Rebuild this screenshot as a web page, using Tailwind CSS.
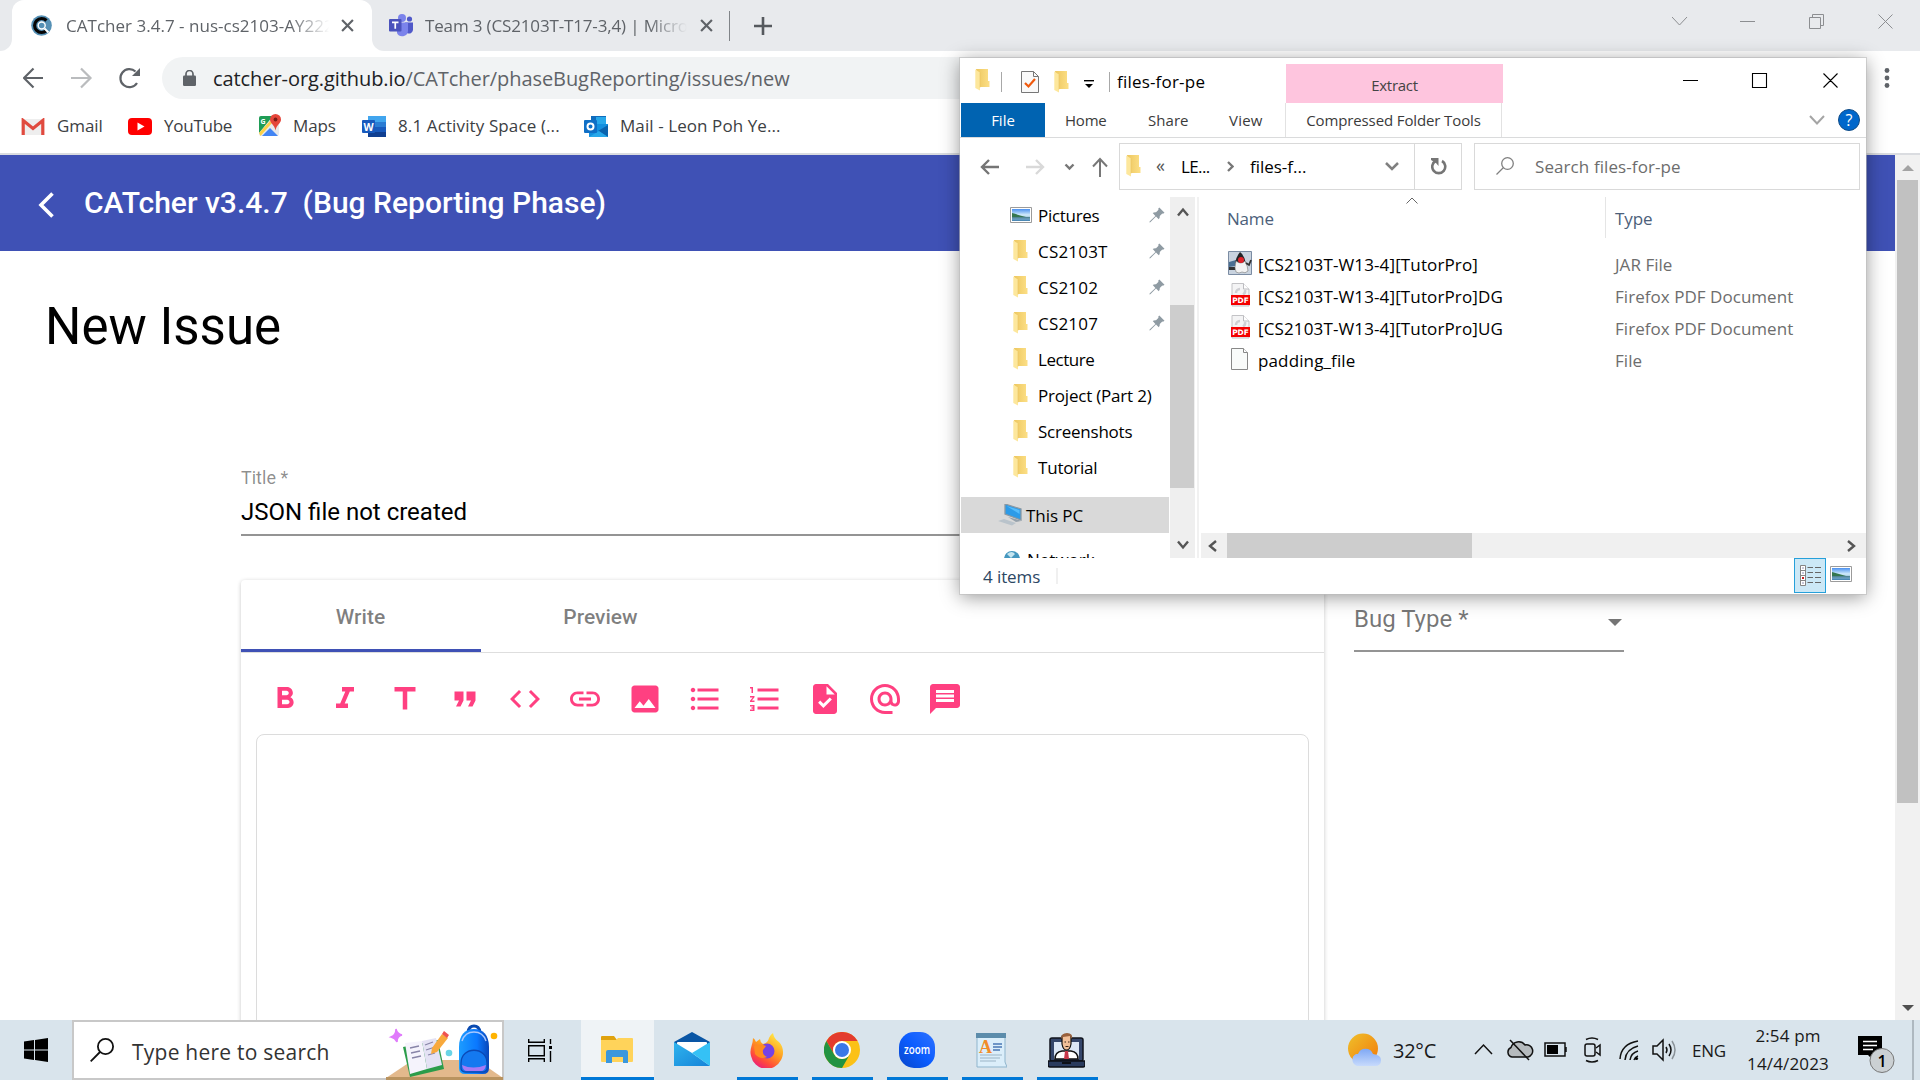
<!DOCTYPE html>
<html lang="en">
<head>
<meta charset="utf-8">
<title>CATcher</title>
<script src="https://cdn.jsdelivr.net/npm/@tailwindcss/browser@4"></script>
</head>
<body class="w-[1920px] h-[1080px] overflow-hidden relative flex flex-col bg-white font-['Open_Sans',sans-serif]">

<svg class="absolute size-0">
  <defs>
    <linearGradient id="fold" x1="0" x2="1"><stop offset="0" stop-color="#edc75f"/><stop offset="1" stop-color="#fcdf86"/></linearGradient>
    <linearGradient id="sky" x1="0" x2="0" y1="0" y2="1"><stop offset="0" stop-color="#4a90f0"/><stop offset=".5" stop-color="#d3ecfb"/><stop offset="1" stop-color="#3f7fae"/></linearGradient>
    <linearGradient id="sun" x1="0" x2="1" y1="0" y2="1"><stop offset="0" stop-color="#efc02b"/><stop offset="1" stop-color="#f27a0a"/></linearGradient>
    <linearGradient id="cloud" x1="0" x2="0" y1="0" y2="1"><stop offset="0" stop-color="#7fa8f5"/><stop offset="1" stop-color="#c7dafc"/></linearGradient>
    <linearGradient id="bag" x1="0" x2="1"><stop offset="0" stop-color="#1c9cff"/><stop offset=".6" stop-color="#0a78ff"/><stop offset="1" stop-color="#0a46b8"/></linearGradient>
    <linearGradient id="fox" x1=".8" x2=".2" y1="0" y2="1"><stop offset="0" stop-color="#fff04a"/><stop offset=".45" stop-color="#ff9a1f"/><stop offset=".75" stop-color="#ff4a3c"/><stop offset="1" stop-color="#e61587"/></linearGradient>
    <linearGradient id="mailg" x1="0" x2="1" y1="0" y2="1"><stop offset="0" stop-color="#2fb4ee"/><stop offset="1" stop-color="#1583d8"/></linearGradient>
    <linearGradient id="zoomg" x1="1" x2="0" y1="0" y2="1"><stop offset="0" stop-color="#2f72ff"/><stop offset=".5" stop-color="#0b5cff"/><stop offset="1" stop-color="#0846c9"/></linearGradient>
    <symbol id="folder" viewBox="0 0 15 22"><path d="M1 0h12v12h1.500v6H4z" fill="url(#fold)"/><path d="M.3.6 5 3.500V21.500L.3 19z" fill="#fde79c"/><path d="M5 3.500v15" stroke="#e9c463" stroke-width=".6"/></symbol>
    <symbol id="pic" viewBox="0 0 22 16"><path d="M.5.5h21v15H.5z" fill="#fff" stroke="#9b9b9b"/><path d="M2 2h18v12H2z" fill="url(#sky)"/><path d="M2 6q7 2 14 4H2z" fill="#35764f"/><path d="M2 10h18v1.500H2z" fill="#356c78" opacity=".7"/></symbol>
    <symbol id="pin" viewBox="0 0 16 16"><path d="M10.300.5 15.500 5.700 14 6.800 13.300 6.600 10.800 9.100Q11 11 9.800 12.300L7 9.500 1.300 15.300.5 15.400.6 14.600 6.400 8.900 3.700 6.100Q5 5 7 5.200L9.500 2.700 9.200 1.700z" fill="#8f9ba3"/></symbol>
    <symbol id="pdf" viewBox="0 0 19 24"><path d="M1 .5h11.500L18 6v17H1z" fill="#f4f4f5" stroke="#c3c3c6"/><path d="M12.500.5V6H18" fill="#fff" stroke="#bcbcc0"/><path d="M5 10a4 4 0 0 1 4-4M14 7a4 4 0 0 1-2 4.500" stroke="#cfcfd3" stroke-width="2.500" fill="none"/><path d="M0 12h19v10H0z" fill="#f40000"/><text x="9.500" y="19.700" text-anchor="middle" font-family="DejaVu Sans" font-weight="700" font-size="7.400" fill="#fff">PDF</text></symbol>
    <symbol id="file" viewBox="0 0 17 22"><path d="M.5.5h12L16.500 4.500v17H.5z" fill="#f9fbfa" stroke="#888"/><path d="M12.500.5v4h4" fill="#fff" stroke="#888"/></symbol>
    <symbol id="x" viewBox="0 0 12 12"><path d="m1 1 10 10M11 1 1 11" stroke="currentColor" stroke-width="2" fill="none"/></symbol>
    <symbol id="teams" viewBox="0 0 24 23"><circle cx="13" cy="4" r="4" fill="#7b83eb"/><circle cx="20.500" cy="5" r="2.600" fill="#5059c9"/><path d="M16 8.500h8v7.500a4 4 0 0 1-6 3z" fill="#5059c9"/><path d="M8 8.500h11V17a5.800 5.800 0 0 1-11 2z" fill="#7b83eb"/><rect y="5" width="12.500" height="12.500" rx="1" fill="#4b53bc"/><path d="M3 8.300h6.500M6.250 8.300v6.500" stroke="#fff" stroke-width="1.700"/></symbol>
  </defs>
</svg>

<!-- browser tab strip -->
<header class="h-[51px] shrink-0 bg-[#e8eaed] flex text-[#5f6368]">
  <div class="w-3 bg-white"><div class="size-full bg-[#e8eaed] rounded-br-xl"></div></div>
  <div class="w-[360px] bg-white rounded-t-xl flex items-center pl-[19px] pr-[17px]">
    <svg class="size-[21px] shrink-0" viewBox="0 0 21 21"><circle cx="10.500" cy="10.500" r="10.300" fill="#5590b5"/><path d="M15.500 5.500a7 7 0 1 0 0 10" fill="none" stroke="#050505" stroke-width="3.200"/><circle cx="10.700" cy="10.500" r="3.500" fill="#5590b5" stroke="#fff" stroke-width="1.400"/><path d="m13.500 13.500 4 4" stroke="#fff" stroke-width="2"/></svg>
    <span class="ml-[14px] w-[266px] overflow-hidden whitespace-nowrap text-[17px] tracking-[0.02px] [mask-image:linear-gradient(to_right,black_84%,transparent_99%)]">CATcher 3.4.7 - nus-cs2103-AY2223</span>
    <svg class="size-[13px] ml-[9px] shrink-0"><use href="#x"/></svg>
  </div>
  <div class="w-3 bg-white"><div class="size-full bg-[#e8eaed] rounded-bl-xl"></div></div>
  <div class="flex items-center pl-[5px]">
    <svg class="w-6 h-[23px]"><use href="#teams"/></svg>
    <span class="ml-[12px] w-[262px] overflow-hidden whitespace-nowrap text-[17px] tracking-[-0.15px] [mask-image:linear-gradient(to_right,black_85%,transparent_100%)]">Team 3 (CS2103T-T17-3,4) | Microsoft</span>
    <svg class="size-[13px] ml-[13px]"><use href="#x"/></svg>
    <div class="w-px h-[30px] bg-[#808488] ml-[16px]"></div>
    <svg class="size-[18px] ml-6" viewBox="0 0 18 18"><path d="M9 0v18M0 9h18" stroke="#55595e" stroke-width="2.600"/></svg>
  </div>
  <div class="ml-auto flex items-start pt-[14px] pr-[27px]">
    <svg class="w-[221px] h-[16px]" viewBox="0 0 221 16" fill="none" stroke="#8c8e91"><path d="m0 3 7.500 8L15 3M68 7.500h15M137.500 3.500h11v11h-11zM140.500 3.500v-3h11v11h-3M206.500.5l14 14M220.500.5l-14 14"/></svg>
  </div>
</header>

<!-- address bar -->
<div class="h-[54px] shrink-0 flex items-center pl-[23px] pr-[30px]">
  <svg class="w-[118px] h-6" viewBox="0 0 118 24" fill="none" stroke-width="2.200"><path d="M20 12H1.500M10.500 2.500 1 12l9.500 9.500" stroke="#5f6368"/><path d="M48 12h18.500M58 2.500l9.500 9.500-9.500 9.500" stroke="#babcbe"/><path d="M114 17a9 9 0 1 1-1.500-11.500" stroke="#5f6368"/><path d="M117 2v8h-8z" fill="#5f6368"/></svg>
  <div class="ml-[21px] h-[42px] flex-1 mr-[30px] rounded-full bg-[#f1f3f4] flex items-center pl-[21px]">
    <svg class="w-[13px] h-4" viewBox="0 0 13 16"><rect y="5.500" width="13" height="10.500" rx="1.200" fill="#5f6368"/><path d="M3 6V4a3.500 3.500 0 0 1 7 0v2" stroke="#5f6368" stroke-width="1.700" fill="none"/></svg>
    <span class="ml-[17px] text-[20px] tracking-[-0.07px] text-[#5f6368] mt-px"><span class="text-[#202124]">catcher-org.github.io</span>/CATcher/phaseBugReporting/issues/new</span>
  </div>
  <svg class="w-[6px] h-[20px]" viewBox="0 0 6 20" fill="#5f6368"><circle cx="3" cy="2.500" r="2.400"/><circle cx="3" cy="10" r="2.400"/><circle cx="3" cy="17.500" r="2.400"/></svg>
</div>

<!-- bookmarks -->
<nav class="h-[50px] shrink-0 border-b-2 border-[#dadce0] flex items-center text-[17px] text-[#3c4043] pl-[21px] pb-[6px]">
  <svg class="w-[24px] h-[18px] mt-px" viewBox="0 0 24 18"><path d="M1 1h22v16H1z" fill="#eee"/><path d="M2.200 17V2.500L12 10.500l9.800-8V17" fill="none" stroke="#e04a3f" stroke-width="3.200"/></svg>
  <span class="ml-3 w-[71px] tracking-[-0.1px]">Gmail</span>
  <svg class="w-6 h-[17px] mt-px" viewBox="0 0 24 17"><rect width="24" height="17" rx="4" fill="#f00"/><path d="m9.500 4.500 7 4-7 4z" fill="#fff"/></svg>
  <span class="ml-3 w-[95px] tracking-[-0.25px]">YouTube</span>
  <svg class="w-[23px] h-[22px] mb-[2px]" viewBox="0 0 23 22"><rect x="0" y="2" width="20" height="20" rx="2" fill="#e7e9ec"/><path d="M0 4q0-2 2-2h12L0 19z" fill="#1f9d56"/><path d="m0 19 11-12 2 2L1.500 22z" fill="#fcd147"/><path d="m3 22 8-8 8 8z" fill="#4285f4"/><path d="M16.500 0a5.500 5.500 0 0 1 5.500 5.500c0 4-4.500 5-5.500 11-1-6-5.500-7-5.500-11A5.500 5.500 0 0 1 16.500 0z" fill="#e5453a"/><circle cx="16.500" cy="5.500" r="1.900" fill="#7a1c16"/><text x="1.500" y="9.500" font-size="7" font-weight="700" fill="#fff">G</text></svg>
  <span class="ml-[11px] w-[69px] tracking-[-0.1px]">Maps</span>
  <svg class="w-6 h-[21px]" viewBox="0 0 24 21"><path d="M6 0h18v6H6z" fill="#41a5ee"/><path d="M6 6h18v5H6z" fill="#2b7cd3"/><path d="M6 11h18v5H6z" fill="#185abd"/><path d="M6 16h18v5H6z" fill="#103f91"/><rect y="4" width="13" height="13" rx="1" fill="#185abd"/><text x="6.500" y="14.500" font-size="10.500" font-weight="700" text-anchor="middle" fill="#fff">W</text></svg>
  <span class="ml-3 w-[186px] whitespace-nowrap tracking-[0.12px]">8.1 Activity Space (...</span>
  <svg class="w-6 h-[21px]" viewBox="0 0 24 21"><path d="M7 0h15v7H7z" fill="#0f6cbd"/><path d="M12 1h10v7H12z" fill="#28a8ea"/><path d="M5 8h19v13H5z" fill="#1490df"/><path d="m24 9-10 6 10 6z" fill="#0a63ae"/><path d="m5 21 10-6 9 6z" fill="#28a8ea"/><rect y="4" width="13" height="13" rx="1" fill="#0f6fc6"/><circle cx="6.500" cy="10.500" r="3" fill="none" stroke="#fff" stroke-width="2"/></svg>
  <span class="ml-3 tracking-[0.08px]">Mail - Leon Poh Ye...</span>
</nav>

<!-- page -->
<div class="flex flex-1 min-h-0 font-[Roboto,sans-serif]">
  <main class="flex-1 min-w-0 overflow-hidden">
    <div class="h-24 bg-[#3f51b5] flex items-center text-white text-[30px] font-medium whitespace-pre pl-[38px]">
      <svg class="w-4 h-[26px] mt-1" viewBox="0 0 16 26" fill="none" stroke="#fff" stroke-width="3.600"><path d="M14.500 1.500 3 13l11.500 11.500"/></svg>
      <h1 class="ml-[30px] pb-[2px]">CATcher v3.4.7  (Bug Reporting Phase)</h1>
    </div>
    <h2 class="pl-[45px] pt-[46px] text-[51px] leading-[60px] text-black">New Issue</h2>
    <div class="flex gap-[30px] pl-[241px] pt-[110px]">
      <div class="w-[1083px]">
        <div class="text-lg leading-[22px] text-black/45">Title *</div>
        <div class="text-[24px] leading-[30px] mt-[8px] text-black">JSON file not created</div>
        <div class="h-[2px] mt-[7px] bg-[#949494]"></div>
        <section class="mt-[44px] h-[480px] bg-white rounded shadow-[0_1px_4px_rgba(0,0,0,0.22)]">
          <div class="h-[73px] flex border-b border-[#dedede] text-[21px] font-medium text-black/50">
            <div class="w-60 flex items-center justify-center border-b-3 border-[#3f51b5] pt-[6px] pr-px">Write</div>
            <div class="w-60 flex items-center justify-center pt-[3px] pr-px">Preview</div>
          </div>
          <div class="h-[81px] flex items-center gap-6 pl-[26px] pt-[10px] fill-[#ff4081]">
            <svg class="size-9" viewBox="0 0 24 24"><path d="M15.600 10.790c.97-.67 1.650-1.770 1.650-2.790 0-2.260-1.750-4-4-4H7v14h7.040c2.090 0 3.710-1.700 3.710-3.790 0-1.520-.86-2.820-2.150-3.420zM10 6.500h3c.83 0 1.500.67 1.500 1.500s-.67 1.500-1.500 1.500h-3v-3zm3.500 9H10v-3h3.500c.83 0 1.500.67 1.500 1.500s-.67 1.500-1.500 1.500z"/></svg>
            <svg class="size-9" viewBox="0 0 24 24"><path d="M10 4v3h2.210l-3.420 8H6v3h8v-3h-2.210l3.420-8H18V4z"/></svg>
            <svg class="size-9" viewBox="0 0 24 24"><path d="M5 4v3h5.500v12h3V7H19V4z"/></svg>
            <svg class="size-9" viewBox="0 0 24 24"><path d="M6 17h3l2-4V7H5v6h3zm8 0h3l2-4V7h-6v6h3z"/></svg>
            <svg class="size-9" viewBox="0 0 24 24"><path d="M9.400 16.600 4.800 12l4.600-4.600L8 6l-6 6 6 6 1.400-1.400zm5.200 0 4.600-4.600-4.600-4.600L16 6l6 6-6 6-1.400-1.400z"/></svg>
            <svg class="size-9" viewBox="0 0 24 24"><path d="M3.900 12c0-1.710 1.390-3.100 3.100-3.100h4V7H7c-2.760 0-5 2.240-5 5s2.240 5 5 5h4v-1.900H7c-1.710 0-3.100-1.390-3.100-3.100zM8 13h8v-2H8v2zm9-6h-4v1.900h4c1.710 0 3.100 1.390 3.100 3.100s-1.390 3.100-3.100 3.100h-4V17h4c2.760 0 5-2.240 5-5s-2.240-5-5-5z"/></svg>
            <svg class="size-9" viewBox="0 0 24 24"><path d="M21 19V5c0-1.100-.9-2-2-2H5c-1.100 0-2 .9-2 2v14c0 1.100.9 2 2 2h14c1.100 0 2-.9 2-2zM8.500 13.500l2.500 3.010L14.500 12l4.500 6H5l3.500-4.500z"/></svg>
            <svg class="size-9" viewBox="0 0 24 24"><path d="M4 10.500c-.83 0-1.500.67-1.500 1.500s.67 1.500 1.500 1.500 1.500-.67 1.500-1.500-.67-1.500-1.500-1.500zm0-6c-.83 0-1.500.67-1.500 1.500S3.170 7.500 4 7.500 5.500 6.830 5.500 6 4.830 4.500 4 4.500zm0 12c-.83 0-1.500.68-1.500 1.500s.68 1.500 1.500 1.500 1.500-.68 1.500-1.500-.67-1.500-1.500-1.500zM7 19h14v-2H7v2zm0-6h14v-2H7v2zm0-8v2h14V5H7z"/></svg>
            <svg class="size-9" viewBox="0 0 24 24"><path d="M2 17h2v.5H3v1h1v.5H2v1h3v-4H2v1zm1-9h1V4H2v1h1v3zm-1 3h1.800L2 13.100v.9h3v-1H3.200L5 10.900V10H2v1zm5-6v2h14V5H7zm0 14h14v-2H7v2zm0-6h14v-2H7v2z"/></svg>
            <svg class="size-9" viewBox="0 0 24 24"><path d="M14 2H6c-1.100 0-1.990.9-1.990 2L4 20c0 1.100.89 2 1.990 2H18c1.100 0 2-.9 2-2V8l-6-6zm-3.060 16L7.400 14.460l1.410-1.410 2.120 2.120 4.240-4.240 1.410 1.410L10.940 18zM13 9V3.500L18.500 9H13z"/></svg>
            <svg class="size-9" viewBox="0 0 24 24"><path d="M12 2C6.480 2 2 6.480 2 12s4.480 10 10 10h5v-2h-5c-4.340 0-8-3.660-8-8s3.660-8 8-8 8 3.660 8 8v1.430c0 .79-.71 1.570-1.500 1.570s-1.500-.78-1.500-1.570V12c0-2.760-2.240-5-5-5s-5 2.240-5 5 2.240 5 5 5c1.380 0 2.640-.56 3.540-1.470.65.89 1.770 1.470 2.960 1.470 1.970 0 3.500-1.600 3.500-3.570V12c0-5.520-4.480-10-10-10zm0 13c-1.660 0-3-1.340-3-3s1.340-3 3-3 3 1.340 3 3-1.340 3-3 3z"/></svg>
            <svg class="size-9" viewBox="0 0 24 24"><path d="M20 2H4c-1.100 0-1.990.9-1.990 2L2 22l4-4h14c1.100 0 2-.9 2-2V4c0-1.100-.9-2-2-2z"/><path d="M6 6h12v2H6zM6 9h12v2H6zM6 12h12v2H6z" fill="#fff"/></svg>
          </div>
          <div class="mx-[15px] h-[400px] border border-[#dcdcdc] rounded-lg"></div>
        </section>
      </div>
      <div class="w-[270px] pt-[137px]">
        <div class="flex items-center justify-between text-[24px] leading-[30px] text-black/55 pr-[2px]">Bug Type *
          <svg class="w-[14px] h-[7px] mt-[6px]" viewBox="0 0 14 7"><path d="M0 0h14L7 7z" fill="#757575"/></svg>
        </div>
        <div class="h-[2px] mt-[16px] bg-[#949494]"></div>
      </div>
    </div>
  </main>
  <div class="w-[25px] bg-[#f1f1f1] flex flex-col items-center justify-between pt-[10px] pb-[9px]">
    <svg class="w-3 h-[6px]" viewBox="0 0 12 6"><path d="M0 6h12L6 0z" fill="#a3a3a3"/></svg>
    <div class="w-[21px] h-[623px] bg-[#c1c1c1] mt-[9px] mb-auto"></div>
    <svg class="w-3 h-[6px]" viewBox="0 0 12 6"><path d="M0 0h12L6 6z" fill="#505050"/></svg>
  </div>
</div>

<!-- taskbar -->
<footer class="h-[60px] shrink-0 bg-[#d9e4ec] flex items-center relative">
  <div class="w-[72px] flex justify-center"><svg class="size-6" viewBox="0 0 24 24"><path d="M0 3.500 10 2v9.600H0zM11 1.900 24 0v11.600H11zM0 12.500h10V22L0 20.500zM11 12.500h13V24l-13-1.900z"/></svg></div>
  <div class="w-[432px] h-[60px] bg-white border-2 border-[#c8c8c8] flex items-center pl-4 relative">
    <svg class="size-6" viewBox="0 0 24 24" fill="none" stroke="#111" stroke-width="1.800"><circle cx="15.500" cy="8.500" r="7.600"/><path d="M10 14 .7 23.300"/></svg>
    <span class="ml-[18px] text-[21px] text-[#333] tracking-[0.23px] mt-[5px]">Type here to search</span>
    <svg class="w-[117px] h-[58px] absolute -right-px top-0" viewBox="0 0 117 58">
      <path d="M27 38h64l26 18H0z" fill="#e3b98c"/><path d="M0 55h117v3H0z" fill="#b9935f"/>
      <path d="M10 7q1 5 6 6-5 1-5 7-2-4-6-5 5-2 5-8z" fill="#e07bfb" stroke="#e07bfb" stroke-width="1.500"/>
      <path d="m17 25 35-7 6 29-34 8z" fill="#2b9c4a"/><path d="m19 21 17-2 5 28-17 5z" fill="#f5f3fc"/><path d="m36 19 14-3 6 27-15 4z" fill="#e4e2f4"/>
      <path d="m24 26 9-2M25 31l9-2M26 36l9-2M39 23l8-3M40 28l9-3M42 33l7-2" stroke="#8884a8" stroke-width="1.300"/>
      <path d="m46 26 10-14 6 4-11 14-6 2z" fill="#f8a93c"/><path d="m56 12 2-3 5 4-2 3z" fill="#ef5350"/>
      <circle cx="63" cy="31" r="3.300" fill="#6ad4e6"/><circle cx="108" cy="14" r="3.300" fill="#ffb300"/>
      <path d="M82 10q1-6 6-6t6 6" fill="none" stroke="#0a4ab0" stroke-width="3"/>
      <path d="M73 25C73 13 79 7 88 7s15 6 15 18v21q0 6-6 6H79q-6 0-6-6z" fill="url(#bag)"/><path d="M76 19q3-9 12-9t12 9" fill="none" stroke="#a9c8ff" stroke-width="1.500"/><path d="M75 41c0-17 26-17 26 0v6q-1 3-5 3H80q-4 0-5-3z" fill="#1479f0" stroke="#0b49b5" stroke-width="1.300"/><path d="M76 43q11 5 24 0-1 6-5 6H81q-4 0-5-6z" fill="#a67af5"/>
    </svg>
  </div>
  <div class="w-[77px] flex justify-center pr-[5px]"><svg class="w-6 h-[23px]" viewBox="0 0 24 23" fill="none" stroke="#000" stroke-width="1.400"><path d="M.7 0v3.300h15.600V0M.7 6.700h15.600v10H.7zM.7 23v-3.300h15.600V23M22.500 0v5M22.500 12v11"/><path d="M21 7h3v3h-3z" fill="#000" stroke="none"/></svg></div>
  <div class="w-[73px] h-full bg-[#eff3f6] border-b-3 border-[#0078d7] flex items-center justify-center pr-[2px]">
    <svg class="w-8 h-7 mt-[3px]" viewBox="0 0 32 28"><path d="M0 1q0-1 1-1h12l3 4H0z" fill="#e0a20e"/><path d="M0 4h15l2-2h14q1 0 1 1v22q0 1-1 1H1q-1 0-1-1z" fill="#ffd35a"/><path d="M5 16q0-2 2-2h18q2 0 2 2v11h-5v-6H11v6H5z" fill="#3a97dd"/></svg>
  </div>
  <div class="w-[76px] h-full flex items-center justify-center pb-[3px]">
    <svg class="w-9 h-[34px]" viewBox="0 0 36 34"><path d="M0 10 18 0l18 10v6H0z" fill="#0a56a5"/><path d="M3 11q0-1 1-1h28q1 0 1 1v14H3z" fill="#fff"/><path d="M0 10v24h36L18 21z" fill="url(#mailg)"/><path d="M36 10v24L18 21z" fill="#35c1f5"/></svg>
  </div>
  <div class="flex h-full gap-[14px] [&>div]:w-[61px] [&>div]:flex [&>div]:items-center [&>div]:justify-center [&>div]:border-b-3 [&>div]:border-[#0078d7] [&>div]:pr-[2px] [&>div]:pt-[3px] ml-[7px]">
    <div><svg class="w-[34px] h-[35px]" viewBox="0 0 34 35"><path d="M3 5q2 1 3 4l4-3q0 3 3 5 5-1 6-6 1-3 4-5 1 6 6 9c5 5 5 13 2 18A16 16 0 0 1 1 23C-1 16 3 12 3 5z" fill="url(#fox)"/><circle cx="17" cy="18" r="7.500" fill="#7542e5"/><path d="M4 13q6-3 12 0l-3 4q-1 5 4 7-7 3-12-3z" fill="#ff8b20"/></svg></div>
    <div><svg class="size-9" viewBox="0 0 36 36"><circle cx="18" cy="18" r="18" fill="#fbc116"/><path d="M2.400 9A18 18 0 0 1 33.600 9H18a9 9 0 0 0-7.800 13.500z" fill="#e33b2e"/><path d="M2.400 9A18 18 0 0 0 18 36l7.800-13.500a9 9 0 0 1-15.600 0z" fill="#229342"/><circle cx="18" cy="18" r="9" fill="#fff"/><circle cx="18" cy="18" r="7" fill="#3b78e7"/></svg></div>
    <div><svg class="size-9" viewBox="0 0 36 36"><rect width="36" height="36" rx="15" fill="url(#zoomg)"/><text x="18" y="21.500" font-size="12.500" font-weight="600" text-anchor="middle" fill="#fff" textLength="26" lengthAdjust="spacingAndGlyphs">zoom</text></svg></div>
    <div><svg class="w-[31px] h-[35px]" viewBox="0 0 31 35"><path d="M1 1h28v28l2 5H1z" fill="#dbeefa" stroke="#8fb5cd"/><path d="M0 0h30v5H0z" fill="#5c8cab"/><text x="3" y="20" font-family="Liberation Serif" font-weight="700" font-size="18" fill="#f28c28">A</text><path d="M17 11h9M17 14h9M17 17h7" stroke="#4a78b5" stroke-width="1.500"/><path d="M4 22h22M4 25h20M4 28h16" stroke="#9bb3c5" stroke-width="1.200"/></svg></div>
    <div><svg class="w-[37px] h-9" viewBox="0 0 37 36"><rect x="2" y="6" width="33" height="23" rx="2" fill="#35466b" stroke="#10131c" stroke-width="1.500"/><path d="M6 10h25v17H6z" fill="#dbe6f5"/><path d="M7 27q0-7 7-8h9q7 1 7 8z" fill="#fff" stroke="#111" stroke-width="1.500"/><path d="M17 19h3l1 8h-5z" fill="#c7384a"/><path d="M14 4q4-3 9 0v8q-1 6-4.500 6T14 12z" fill="#f1bf98" stroke="#111" stroke-width="1.200"/><path d="M13 7q0-6 6-6t5 6l-2-3-7 1z" fill="#99603c"/><path d="M16.500 10h1.500M20 10h1.500M17.500 14.500h3" stroke="#3a2418" stroke-width="1.200"/><path d="M0 29h37v4q0 2-2 2H2q-2 0-2-2z" fill="#2a3b5e" stroke="#0d0f16" stroke-width="1.500"/><path d="M14 30h9v2h-9z" fill="#0d0f16"/></svg></div>
  </div>
  <!-- tray -->
  <div class="ml-auto flex items-center h-full w-[572px] text-[#1a1a1a]">
    <svg class="w-[34px] h-[34px] shrink-0" viewBox="0 0 34 34"><circle cx="15" cy="15.500" r="15" fill="url(#sun)"/><path d="M9 33a6.500 6.500 0 0 1-1-12q2 0 2 0a8 8 0 0 1 15 0q8 1 8 6 0 6-6 6z" fill="url(#cloud)"/></svg>
    <span class="ml-[11px] w-[81px] text-[20px] tracking-[-0.25px] mt-[2px]">32°C</span>
    <svg class="w-[202px] h-7 shrink-0" viewBox="0 0 202 28" fill="none" stroke="#111" stroke-width="1.500">
      <path d="m1 18 8.500-9L18 18"/>
      <path d="M38 21a5 5 0 0 1-1-9.500A8 8 0 0 1 51 9a6 6 0 0 1 3 12z" fill="#b5babd"/><path d="m36 4 19 20"/>
      <path d="M71 7h20v13H71zM92 11v5"/><path d="M73 9h11v9H73z" fill="#000" stroke="none"/>
      <rect x="111" y="8" width="10" height="12" rx="2"/><path d="m122 12 4-3v10l-4-3M112 3.500q6-3 12 0M112 24.500q6 3 12 0"/>
      <path d="M146 23Q147 8 164 5M151 24q1-11 13-14M156 24q1-7 8-9M160 24q1-3 4-4"/><circle cx="162.500" cy="22.500" r="1.600" fill="#000" stroke="none"/>
      <path d="M179 10h4l6-6v20l-6-6h-4zM192 11q2 3 0 6M195 8q4 6 0 12"/><path d="M198 5q6 9 0 18" stroke="#8b9399"/>
    </svg>
    <span class="ml-[16px] w-[36px] text-[17px] tracking-[-0.3px] mt-[2px]">ENG</span>
    <div class="ml-[18px] w-[84px] text-center text-[17px] leading-[28px] tracking-[0.15px] whitespace-nowrap">2:54 pm<br>14/4/2023</div>
    <svg class="w-[38px] h-[38px] ml-[28px] mt-[8px]" viewBox="0 0 38 38"><path d="M0 1h24v19h-9v5l-5-5H0z"/><path d="M5 6.500h14M5 10.500h14M5 14.500h10" stroke="#fff" stroke-width="1.300"/><circle cx="24" cy="25.500" r="12" fill="#cbd0d3" stroke="#777"/><text x="24" y="31.500" font-size="16" font-weight="600" text-anchor="middle">1</text></svg>
  </div>
  <div class="absolute right-[6px] inset-y-0 w-[2px] bg-[#aeb8c0]"></div>
</footer>

<!-- file explorer window -->
<div class="absolute left-[960px] top-[58px] w-[906px] h-[536px] bg-white shadow-[0_3px_18px_rgba(0,0,0,0.42)] flex flex-col outline outline-[#bdbdbd]/60">
  <div class="h-[45px] shrink-0 flex">
    <div class="flex items-center pl-[15px] w-[326px] pt-[2px]">
      <svg class="w-[15px] h-[22px] mb-[3px]"><use href="#folder"/></svg>
      <div class="w-px h-5 bg-[#a8a8a8] ml-[11px]"></div>
      <svg class="w-[18px] h-[22px] ml-[19px]" viewBox="0 0 18 22"><path d="M.5.5h12l5 5v16H.5z" fill="#f9f9f9" stroke="#777"/><path d="M12.500.5v5h5" fill="none" stroke="#777"/><path d="m4 12 3.500 3.500L14 8" fill="none" stroke="#f0590c" stroke-width="2.200"/></svg>
      <svg class="w-[15px] h-[22px] ml-[15px]"><use href="#folder"/></svg>
      <svg class="w-[10px] h-2 ml-[15px] mt-1" viewBox="0 0 10 8"><path d="M0 .7h10" stroke="#000" stroke-width="1.400"/><path d="M1 4h8L5 8z"/></svg>
      <div class="w-px h-5 bg-[#a8a8a8] ml-[15px]"></div>
      <span class="ml-[7px] text-[17px] text-black tracking-[0.2px]">files-for-pe</span>
    </div>
    <div class="w-[217px] mt-[6px] bg-[#fec5de] text-[15px] text-[#444] tracking-[-0.3px] flex items-center justify-center pt-1">Extract</div>
    <svg class="w-[157px] h-4 ml-[180px] mt-[14px]" viewBox="0 0 157 16" fill="none" stroke="#000" stroke-width="1.100"><path d="M0 8.500h15M69.500 1.500h14v14h-14zM140.500 1.500l14 14M154.500 1.500l-14 14"/></svg>
  </div>
  <div class="h-[35px] shrink-0 flex items-center border-b border-[#dadbdc] text-[15px] text-[#3b3b3b] px-px">
    <div class="w-[84px] h-full bg-[#0063b1] text-white flex items-center justify-center">File</div>
    <span class="ml-5 w-[83px] tracking-[-0.2px]">Home</span>
    <span class="w-[81px] tracking-[0.05px]">Share</span>
    <span class="w-[56px] tracking-[0.2px]">View</span>
    <div class="w-[217px] h-full border-x border-[#e2e2e2] flex items-center justify-center tracking-[-0.12px] whitespace-nowrap">Compressed Folder Tools</div>
    <svg class="w-4 h-[10px] ml-auto" viewBox="0 0 16 10"><path d="m1 1 7 7.500L15 1" fill="none" stroke="#a5a5a5" stroke-width="2"/></svg>
    <svg class="size-[22px] ml-[13px] mr-[5px]" viewBox="0 0 22 22"><circle cx="11" cy="11" r="10.500" fill="#0067cb" stroke="#114c86"/><text x="11" y="16.500" font-size="16" text-anchor="middle" fill="#fff">?</text></svg>
  </div>
  <div class="h-[58px] shrink-0 flex items-center text-[17px] pb-px">
    <svg class="w-[129px] h-5 ml-[20px] mt-px" viewBox="0 0 129 20" fill="none" stroke-width="2.400"><path d="M19 10H2M9 3l-7 7 7 7" stroke="#757575"/><path d="M46 10h17M56 3l7 7-7 7" stroke="#d9d9d9"/><path d="m85.500 7.500 4 4 4-4" stroke="#777"/><path d="M120 20V3M113 9.500l7-7.500 7 7.500" stroke="#777" stroke-width="2"/></svg>
    <div class="w-[343px] h-[47px] border border-[#d9d9d9] ml-[10px] flex items-center text-black">
      <svg class="w-[15px] h-[22px] ml-[6px] mb-[2px]"><use href="#folder"/></svg>
      <span class="ml-[15px] text-[#555] text-[18px] leading-none -mt-[4px]">«</span>
      <span class="ml-[16px] w-[46px] tracking-[-0.6px]">LE...</span>
      <svg class="w-[7px] h-[11px]" viewBox="0 0 7 11"><path d="m1 1 4.500 4.500L1 10" fill="none" stroke="#777" stroke-width="2.300"/></svg>
      <span class="ml-[16px]">files-f...</span>
      <svg class="w-[14px] h-[9px] ml-auto mr-[15px]" viewBox="0 0 14 9"><path d="m1 1 6 6 6-6" fill="none" stroke="#808080" stroke-width="2.500"/></svg>
      <div class="w-[47px] h-full border-l border-[#d9d9d9] flex items-center justify-center"><svg class="w-4 h-[17px] ml-px" viewBox="0 0 16 17"><path d="M11 3a6.500 6.500 0 1 1-6.500 0" fill="none" stroke="#757575" stroke-width="2.600"/><path d="M0 0h7.500v8L5 5 0 2z" fill="#757575"/></svg></div>
    </div>
    <div class="w-[386px] h-[47px] border border-[#d9d9d9] ml-[12px] flex items-center text-[#6d6d6d] pl-[21px]">
      <svg class="size-[18px] -mt-[2px]" viewBox="0 0 18 18" fill="none" stroke="#808080" stroke-width="1.300"><circle cx="11.500" cy="6.500" r="5.800"/><path d="M7.500 10.500.5 17.500"/></svg>
      <span class="ml-[21px] tracking-[0.09px] mt-px">Search files-for-pe</span>
    </div>
  </div>
  <div class="h-[362px] shrink-0 flex text-[17px] text-black pt-px">
    <div class="w-[210px] pl-px overflow-hidden whitespace-nowrap [&>div]:h-9 [&>div]:flex [&>div]:items-center [&>div>span]:pt-[2px]">
      <div class="pl-[49px]"><svg class="w-[22px] h-4"><use href="#pic"/></svg><span class="ml-[6px] w-[111px] tracking-[-0.3px]">Pictures</span><svg class="size-4"><use href="#pin"/></svg></div>
      <div class="pl-[52px]"><svg class="w-[15px] h-[22px]"><use href="#folder"/></svg><span class="ml-[10px] w-[111px] tracking-[0.2px]">CS2103T</span><svg class="size-4"><use href="#pin"/></svg></div>
      <div class="pl-[52px]"><svg class="w-[15px] h-[22px]"><use href="#folder"/></svg><span class="ml-[10px] w-[111px] tracking-[0.2px]">CS2102</span><svg class="size-4"><use href="#pin"/></svg></div>
      <div class="pl-[52px]"><svg class="w-[15px] h-[22px]"><use href="#folder"/></svg><span class="ml-[10px] w-[111px] tracking-[0.2px]">CS2107</span><svg class="size-4"><use href="#pin"/></svg></div>
      <div class="pl-[52px]"><svg class="w-[15px] h-[22px]"><use href="#folder"/></svg><span class="ml-[10px] tracking-[-0.45px]">Lecture</span></div>
      <div class="pl-[52px]"><svg class="w-[15px] h-[22px]"><use href="#folder"/></svg><span class="ml-[10px] tracking-[-0.2px]">Project (Part 2)</span></div>
      <div class="pl-[52px]"><svg class="w-[15px] h-[22px]"><use href="#folder"/></svg><span class="ml-[10px] tracking-[-0.23px]">Screenshots</span></div>
      <div class="pl-[52px]"><svg class="w-[15px] h-[22px]"><use href="#folder"/></svg><span class="ml-[10px] tracking-[-0.2px]">Tutorial</span></div>
      <div class="mt-3 mr-[1px] bg-[#d9d9d9] pl-[37px]"><svg class="w-6 h-[22px]" viewBox="0 0 24 22"><path d="m7 0 16 5v11L7 10z" fill="#2c9be8" stroke="#8a98a3" stroke-width="1.300"/><path d="m8.500 2 13 4v4z" fill="#55bcfb"/><path d="M0 17l6-2 12 4-4 2.500z" fill="#b9c3cb"/><path d="m10 13 11 3 2 1-5 1z" fill="#94a0aa"/></svg><span class="ml-1 tracking-[-0.05px]">This PC</span></div>
      <div class="mt-[9px] pl-[43px]"><svg class="size-4 -mt-[3px]" viewBox="0 0 16 16"><circle cx="8" cy="8" r="8" fill="#4497bf"/><path d="M3 3q5-4 8 0l-4 4z" fill="#c5e5f0"/></svg><span class="ml-[7px] -mt-[2px]">Network</span></div>
    </div>
    <div class="w-[25px] bg-[#efefef] flex flex-col items-center relative pt-[10px] pb-[8px]">
      <svg class="w-3 h-[10px]" viewBox="0 0 12 10"><path d="m1 8.500 5-6 5 6" fill="none" stroke="#555" stroke-width="2.400"/></svg>
      <div class="w-full pr-px mt-[88px] mb-auto h-[183px] bg-[#cdcdcd] bg-clip-content"></div>
      <svg class="w-3 h-[10px]" viewBox="0 0 12 10"><path d="m1 1.500 5 6 5-6" fill="none" stroke="#555" stroke-width="2.400"/></svg>
    </div>
    <div class="w-[2px] ml-[2px] bg-[#f1f1f1]"></div>
    <div class="flex-1 ml-[2px] flex flex-col min-w-0">
      <div class="h-[41px] flex text-[#4c607a] relative">
        <div class="w-[405px] border-r border-[#e5e5e5] pl-[26px] flex items-center pt-[3px] tracking-[-0.2px]">Name</div>
        <div class="pl-[9px] flex items-center pt-[3px] tracking-[-0.1px]">Type</div>
        <svg class="w-3 h-[7px] absolute left-[205px] top-0" viewBox="0 0 12 7"><path d="M.5 6.500 6 1l5.500 5.500" fill="none" stroke="#666"/></svg>
      </div>
      <div class="flex flex-col pt-[9px] [&>div]:h-8 [&>div]:flex [&>div]:items-center [&>div>b]:w-[357px] [&>div>b]:font-normal [&>div>b]:tracking-[0.13px] [&>div>b]:pt-[3px] [&>div>span]:pt-[3px] [&>div>span]:text-[#6d6d6d] [&>div>span]:tracking-[0.04px] whitespace-nowrap">
        <div><svg class="size-6 ml-[27px] mr-[6px]" viewBox="0 0 24 24"><path d="M.5.5h23v23H.5z" fill="#c9d3df" stroke="#7b8ca3"/><path d="M1 11l7-2v6l-7 1z" fill="#4a6f92"/><path d="M1 16h6v3H1z" fill="#333"/><path d="M12 1q-4 5-5 11l11 1Q17 5 12 1z" fill="#222528"/><path d="M8 10q5 4 9 0 3 6 3 10-3 3-6 1-3 2-6 0-2-4 0-11z" fill="#f3f3f3" stroke="#777" stroke-width=".6"/><circle cx="13" cy="9" r="3" fill="#e3242b"/><path d="m18 12 3 2 2-5" stroke="#333" stroke-width="1.800" fill="none"/></svg><b>[CS2103T-W13-4][TutorPro]</b><span>JAR File</span></div>
        <div><svg class="w-[19px] h-6 ml-[30px] mr-[8px]"><use href="#pdf"/></svg><b>[CS2103T-W13-4][TutorPro]DG</b><span>Firefox PDF Document</span></div>
        <div><svg class="w-[19px] h-6 ml-[30px] mr-[8px]"><use href="#pdf"/></svg><b>[CS2103T-W13-4][TutorPro]UG</b><span>Firefox PDF Document</span></div>
        <div><svg class="w-[17px] h-[22px] ml-[30px] mr-[10px]"><use href="#file"/></svg><b>padding_file</b><span>File</span></div>
      </div>
      <div class="mt-auto h-[25px] bg-[#f0f0f0] flex items-center justify-between pl-[7px] pr-[10px]">
        <svg class="w-[10px] h-3" viewBox="0 0 10 12"><path d="m8 1-6 5 6 5" fill="none" stroke="#555" stroke-width="2.400"/></svg>
        <div class="w-[245px] h-full bg-[#cdcdcd] ml-[9px] mr-auto"></div>
        <svg class="w-[10px] h-3" viewBox="0 0 10 12"><path d="m2 1 6 5-6 5" fill="none" stroke="#555" stroke-width="2.400"/></svg>
      </div>
    </div>
  </div>
  <div class="flex-1 flex items-center text-[17px] text-[#2c4763] pl-[23px] pr-[14px] pb-px">
    <span class="tracking-[-0.1px] pt-[2px]">4 items</span>
    <div class="w-[2px] h-4 bg-[#f0f0f0] ml-[16px]"></div>
    <div class="ml-auto w-8 h-[35px] bg-[#cce8f6] border border-[#26a0da] flex items-center justify-center">
      <svg class="w-[21px] h-[21px]" viewBox="0 0 21 21" fill="none" stroke="#858585"><path d="M.5.5h5v20h-5zM.5 5.500h5M.5 10.500h5M.5 15.500h5" fill="#fff"/><path d="M7.500 2.500h5.500M15 2.500h6M7.500 7.500h5.500M15 7.500h6M7.500 12.500h5.500M15 12.500h6M7.500 17.500h5.500M15 17.500h6" stroke="#666"/><path d="M2.500 3h1M2.500 8h1M2.500 18h1" stroke="#226"/><path d="M2 13h2" stroke="#c22" stroke-width="2"/></svg>
    </div>
    <svg class="w-[22px] h-4 ml-1 -mt-[3px]"><use href="#pic"/></svg>
  </div>
</div>
</body>
</html>
